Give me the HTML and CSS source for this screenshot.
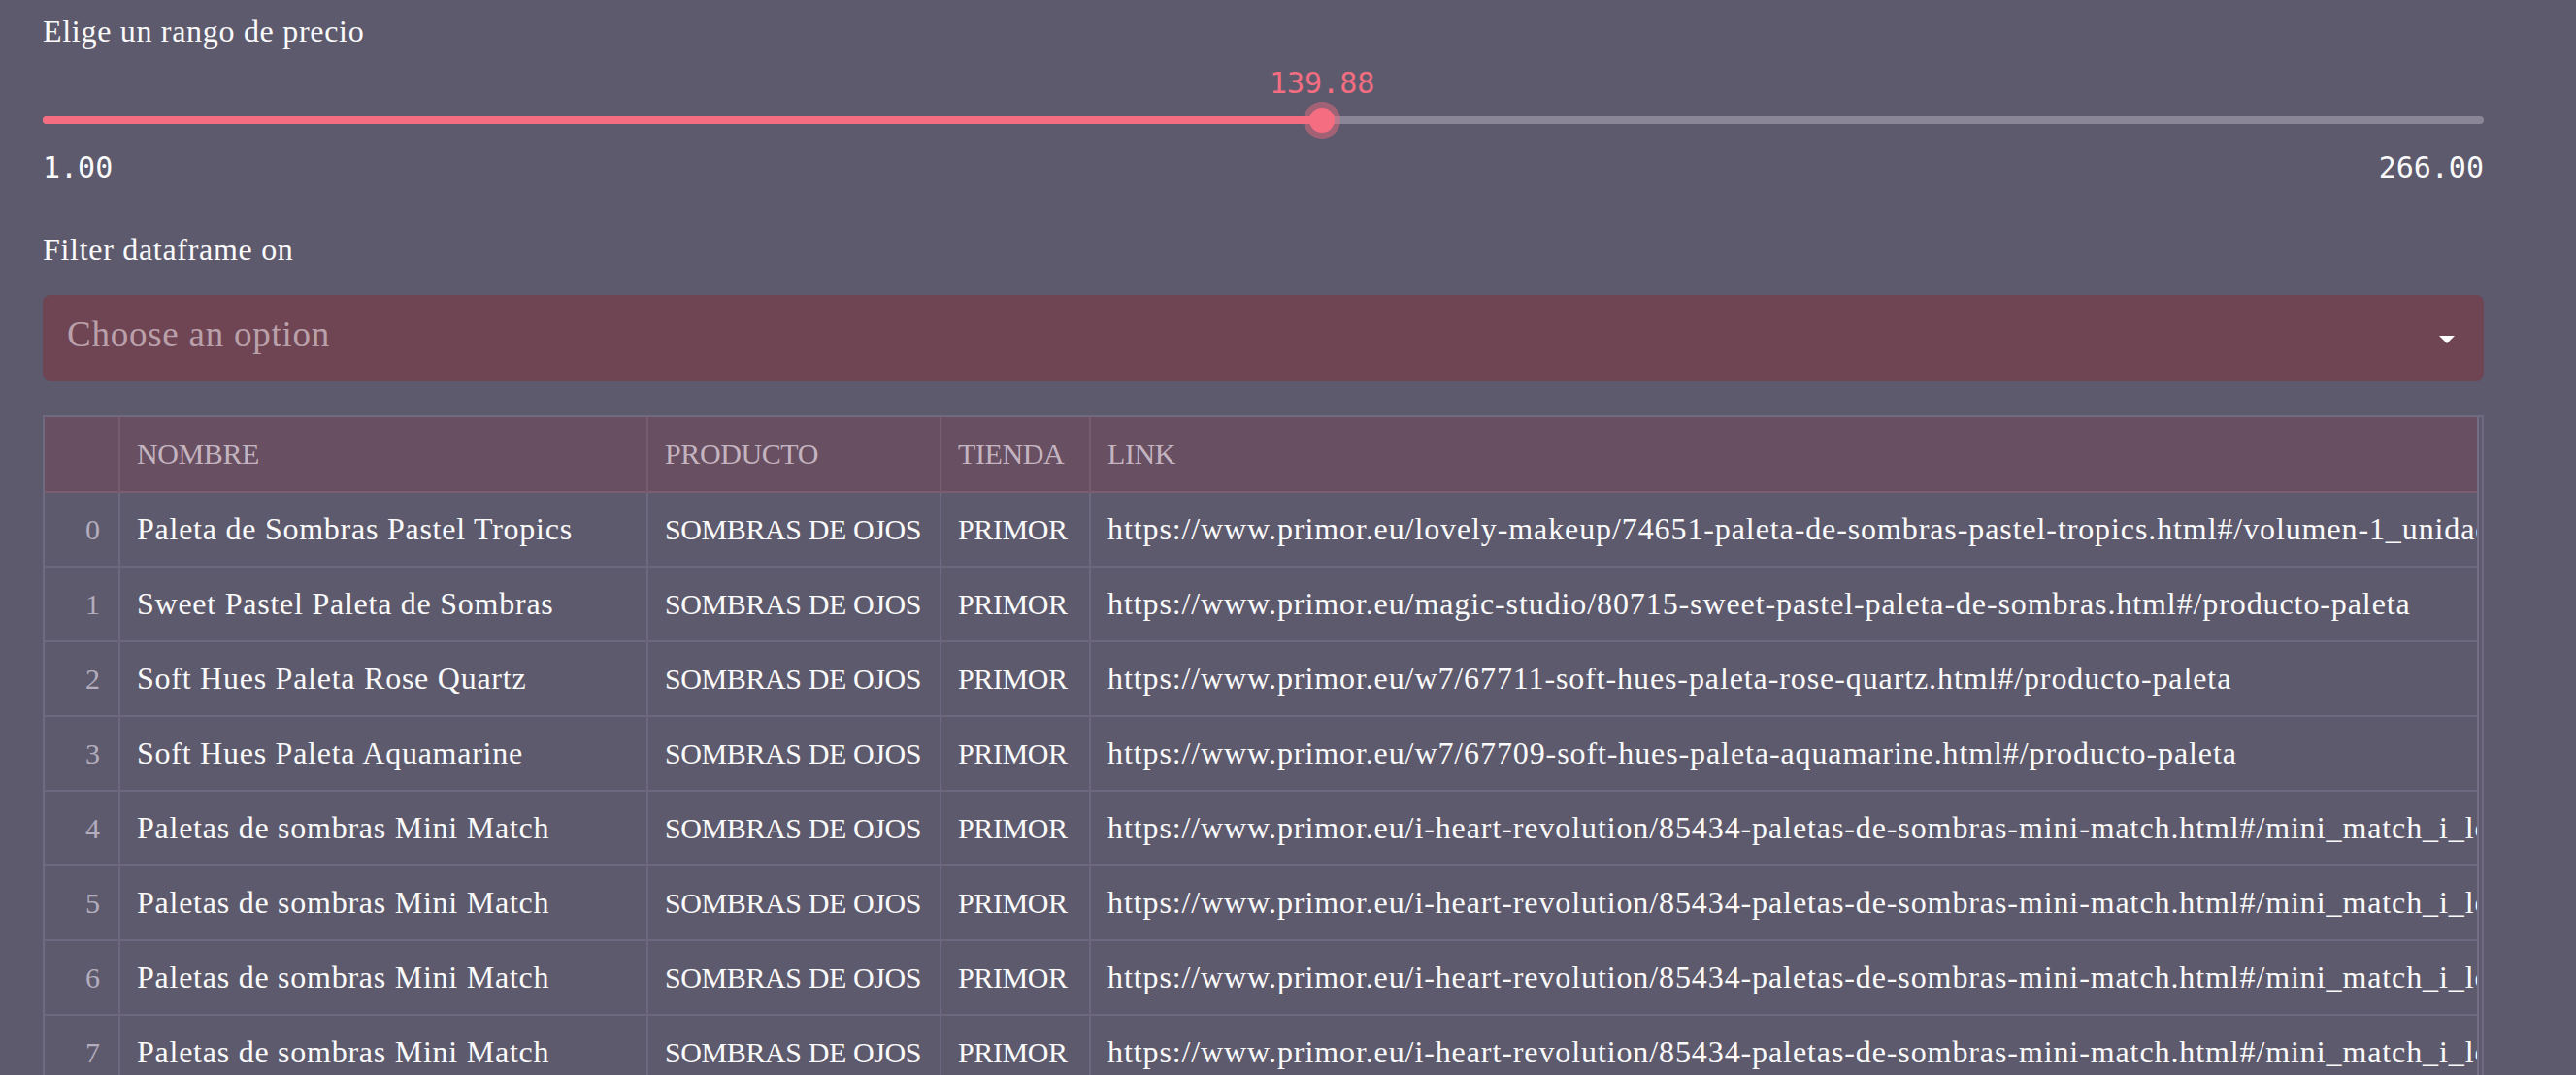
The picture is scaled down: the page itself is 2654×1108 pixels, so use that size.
FILE: index.html
```html
<!DOCTYPE html>
<html lang="es">
<head>
<meta charset="utf-8">
<title>Rango de precio</title>
<link rel="stylesheet" href="styles.css">
</head>
<body>
<main class="main">
  <div class="label">Elige un rango de precio</div>
  <div class="slider">
    <div class="slider-value-row">
      <span class="slider-value" style="left: 52.41%">139.88</span>
    </div>
    <div class="track">
      <div class="track-fill" style="width: 52.41%"></div>
      <div class="thumb" style="left: 52.41%"></div>
    </div>
    <div class="slider-ends"><span>1.00</span><span>266.00</span></div>
  </div>
  <div class="label label-filter">Filter dataframe on</div>
  <div class="select">
    <span class="placeholder">Choose an option</span>
    <svg class="arrow" width="16" height="8" viewBox="0 0 16 8"><path d="M0 0H16L8 8Z" fill="#ffffff"/></svg>
  </div>
  <div class="table">
    <div class="table-scroll">
      <div class="grid">
        <div class="cell head"></div>
        <div class="cell head">NOMBRE</div>
        <div class="cell head">PRODUCTO</div>
        <div class="cell head">TIENDA</div>
        <div class="cell head">LINK</div>

        <div class="cell index">0</div>
        <div class="cell">Paleta de Sombras Pastel Tropics</div>
        <div class="cell caps">SOMBRAS DE OJOS</div>
        <div class="cell caps">PRIMOR</div>
        <div class="cell link">https://www.primor.eu/lovely-makeup/74651-paleta-de-sombras-pastel-tropics.html#/volumen-1_unidad</div>

        <div class="cell index">1</div>
        <div class="cell">Sweet Pastel Paleta de Sombras</div>
        <div class="cell caps">SOMBRAS DE OJOS</div>
        <div class="cell caps">PRIMOR</div>
        <div class="cell link">https://www.primor.eu/magic-studio/80715-sweet-pastel-paleta-de-sombras.html#/producto-paleta</div>

        <div class="cell index">2</div>
        <div class="cell">Soft Hues Paleta Rose Quartz</div>
        <div class="cell caps">SOMBRAS DE OJOS</div>
        <div class="cell caps">PRIMOR</div>
        <div class="cell link">https://www.primor.eu/w7/67711-soft-hues-paleta-rose-quartz.html#/producto-paleta</div>

        <div class="cell index">3</div>
        <div class="cell">Soft Hues Paleta Aquamarine</div>
        <div class="cell caps">SOMBRAS DE OJOS</div>
        <div class="cell caps">PRIMOR</div>
        <div class="cell link">https://www.primor.eu/w7/67709-soft-hues-paleta-aquamarine.html#/producto-paleta</div>

        <div class="cell index">4</div>
        <div class="cell">Paletas de sombras Mini Match</div>
        <div class="cell caps">SOMBRAS DE OJOS</div>
        <div class="cell caps">PRIMOR</div>
        <div class="cell link">https://www.primor.eu/i-heart-revolution/85434-paletas-de-sombras-mini-match.html#/mini_match_i_love_lilac</div>

        <div class="cell index">5</div>
        <div class="cell">Paletas de sombras Mini Match</div>
        <div class="cell caps">SOMBRAS DE OJOS</div>
        <div class="cell caps">PRIMOR</div>
        <div class="cell link">https://www.primor.eu/i-heart-revolution/85434-paletas-de-sombras-mini-match.html#/mini_match_i_love_lilac</div>

        <div class="cell index">6</div>
        <div class="cell">Paletas de sombras Mini Match</div>
        <div class="cell caps">SOMBRAS DE OJOS</div>
        <div class="cell caps">PRIMOR</div>
        <div class="cell link">https://www.primor.eu/i-heart-revolution/85434-paletas-de-sombras-mini-match.html#/mini_match_i_love_lilac</div>

        <div class="cell index">7</div>
        <div class="cell">Paletas de sombras Mini Match</div>
        <div class="cell caps">SOMBRAS DE OJOS</div>
        <div class="cell caps">PRIMOR</div>
        <div class="cell link">https://www.primor.eu/i-heart-revolution/85434-paletas-de-sombras-mini-match.html#/mini_match_i_love_lilac</div>
      </div>
    </div>
  </div>
</main>
</body>
</html>
```
FILE: styles.css
```css
html, body {
  margin: 0;
  padding: 0;
  height: 1108px;
  overflow: hidden;
  background: #5e5a6e;
}

body {
  font-family: "Liberation Serif", "Times New Roman", serif;
  color: #fafafa;
}

.main {
  padding: 12px 95px 0 44px;
}

.label {
  font-size: 32px;
  line-height: 40px;
  letter-spacing: 0.7px;
  color: #fafafa;
}

.slider-value-row {
  position: relative;
  height: 36px;
  margin-top: 16px;
}

.slider-value {
  position: absolute;
  top: 0;
  transform: translateX(-50%);
  font-family: "DejaVu Sans Mono", monospace;
  font-size: 30px;
  line-height: 36px;
  color: #f46d80;
  white-space: nowrap;
}

.track {
  position: relative;
  height: 8px;
  margin-top: 16px;
  border-radius: 4px;
  background: #8a8597;
}

.track-fill {
  height: 8px;
  border-radius: 4px 0 0 4px;
  background: #f46d80;
}

.thumb {
  position: absolute;
  top: 50%;
  width: 26px;
  height: 26px;
  margin: -13px 0 0 -13px;
  border-radius: 50%;
  background: #f46d80;
  box-shadow: 0 0 0 6px rgba(244, 109, 128, 0.45);
}

.slider-ends {
  display: flex;
  justify-content: space-between;
  margin-top: 27px;
  font-family: "DejaVu Sans Mono", monospace;
  font-size: 30px;
  line-height: 36px;
  color: #fafafa;
}

.label-filter {
  margin-top: 46px;
}

.select {
  display: flex;
  align-items: center;
  justify-content: space-between;
  box-sizing: border-box;
  height: 89px;
  margin-top: 27px;
  padding: 0 30px 0 25px;
  border-radius: 8px;
  background: #6f4553;
}

.placeholder {
  font-size: 37px;
  line-height: 44px;
  letter-spacing: 0.75px;
  color: #b9a0aa;
  margin-bottom: 8px;
}

.arrow {
  display: block;
  margin-top: 2px;
}

.table {
  margin-top: 35px;
  border: 2px solid #6f6a80;
  padding-right: 3px;
  height: 700px;
  overflow: hidden;
}

.table-scroll {
  overflow: hidden;
  border-right: 2px solid #736c83;
  height: 100%;
}

.grid {
  display: grid;
  grid-template-columns: 78px 544px 302px 154px 1600px;
  grid-template-rows: 78px;
  grid-auto-rows: 77px;
}

.cell {
  box-sizing: border-box;
  padding: 0 17px;
  border-right: 2px solid #6d6880;
  border-bottom: 2px solid #6d6880;
  font-size: 32px;
  line-height: 75px;
  letter-spacing: 0.75px;
  white-space: nowrap;
  overflow: hidden;
  color: #fafafa;
}

.head {
  background: #684f61;
  border-right-color: #775c6f;
  border-bottom-color: #7a5e70;
  font-size: 30px;
  line-height: 76px;
  letter-spacing: -0.4px;
  color: #c4b4c0;
}

.caps {
  font-size: 30px;
  letter-spacing: -0.4px;
}

.link {
  letter-spacing: 0.9px;
}

.index {
  padding: 0 19px 0 0;
  text-align: right;
  font-size: 30px;
  letter-spacing: 0;
  color: #b3adbd;
}
```
